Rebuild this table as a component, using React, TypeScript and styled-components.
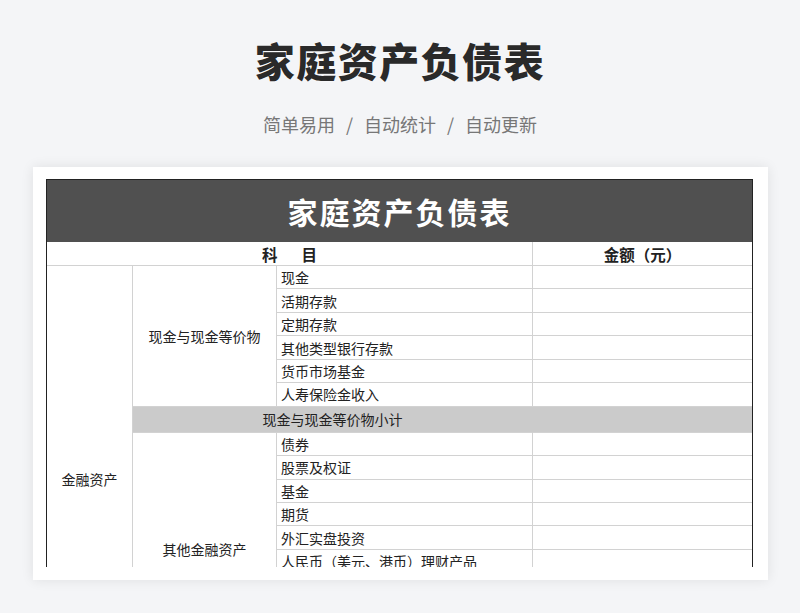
import React from "react";
import styled, { createGlobalStyle } from "styled-components";

const Global = createGlobalStyle`
  html, body {
    margin: 0;
    padding: 0;
    background: #f4f5f7;
  }
  body {
    font-family: "Noto Sans CJK SC", "Noto Sans", "Liberation Sans", sans-serif;
    color: #222;
  }
`;

const Page = styled.div`
  width: 800px;
  height: 613px;
  overflow: hidden;
  display: flex;
  flex-direction: column;
  align-items: center;
  padding-top: 36px;
  box-sizing: border-box;
`;

const Heading = styled.h1`
  margin: 0;
  font-size: 40px;
  line-height: 48px;
  font-weight: 900;
  letter-spacing: 1.5px;
  color: #2a2a2a;
  text-shadow: 0 0 2px #ffffff;
`;

const Tagline = styled.div`
  margin-top: 28px;
  font-size: 18px;
  line-height: 24px;
  color: #777777;
  display: flex;
  align-items: center;
`;

const Slash = styled.span`
  margin: 0 11px;
`;

const Card = styled.div`
  margin-top: 31px;
  margin-left: 1px;
  width: 735px;
  height: 413px;
  box-sizing: border-box;
  background: #ffffff;
  padding: 12px 15px 13px 13px;
  box-shadow: 0 0 12px rgba(0, 0, 0, 0.09);
`;

const Clip = styled.div`
  height: 388px;
  overflow: hidden;
`;

const Sheet = styled.table`
  width: 707px;
  table-layout: fixed;
  border-collapse: separate;
  border-spacing: 0;
  border-top: 1px solid #222;
  border-left: 1px solid #222;
  border-right: 1px solid #222;
  font-size: 14px;
  color: #222;
`;

const TitleCell = styled.td`
  height: 62px;
  background: #505050;
  color: #ffffff;
  font-size: 30px;
  font-weight: 700;
  letter-spacing: 2px;
  text-align: center;
  vertical-align: middle;
  padding: 0;
`;

const HeadCell = styled.td<{ $last?: boolean }>`
  height: 23px;
  padding: 0;
  font-size: 15.5px;
  font-weight: 700;
  text-align: center;
  vertical-align: middle;
  border-bottom: 1px solid #d2d2d2;
  border-right: ${(p) => (p.$last ? "none" : "1px solid #d2d2d2")};
  line-height: 22px;
`;

const HeadSplit = styled.span`
  display: inline-flex;
  gap: 24px;
`;

const Row = styled.tr<{ $h?: number }>`
  height: ${(p) => p.$h ?? 23.45}px;
`;

const GroupCell = styled.td`
  padding: 0 4px;
  text-align: center;
  vertical-align: middle;
  border-right: 1px solid #d2d2d2;
  border-bottom: 1px solid #d2d2d2;
  background: #ffffff;
`;

const ItemCell = styled.td`
  padding: 0 4px;
  text-align: left;
  vertical-align: middle;
  line-height: 20px;
  white-space: nowrap;
  border-right: 1px solid #d2d2d2;
  border-bottom: 1px solid #d2d2d2;
`;

const AmountCell = styled.td<{ $sub?: boolean }>`
  padding: 0;
  border-bottom: 1px solid #d2d2d2;
  background: ${(p) => (p.$sub ? "#cbcbcb" : "#ffffff")};
`;

const SubtotalCell = styled.td`
  padding: 0;
  text-align: center;
  vertical-align: middle;
  background: #cbcbcb;
  border-right: 1px solid #cbcbcb;
  border-bottom: 1px solid #d2d2d2;
`;

type Group = { name: string; items: string[] };

const groups: Group[] = [
  {
    name: "现金与现金等价物",
    items: ["现金", "活期存款", "定期存款", "其他类型银行存款", "货币市场基金", "人寿保险金收入"],
  },
  {
    name: "其他金融资产",
    items: [
      "债券",
      "股票及权证",
      "基金",
      "期货",
      "外汇实盘投资",
      "人民币（美元、港币）理财产品",
      "保险理财产品",
      "证券理财产品",
      "信托理财产品",
      "其他",
    ],
  },
];

const totalRows = groups.reduce((n, g) => n + g.items.length + 1, 0);

export default function App() {
  return (
    <>
      <Global />
      <Page>
        <Heading>家庭资产负债表</Heading>
        <Tagline>
          <span>简单易用</span>
          <Slash>/</Slash>
          <span>自动统计</span>
          <Slash>/</Slash>
          <span>自动更新</span>
        </Tagline>
        <Card>
          <Clip>
            <Sheet>
              <colgroup>
                <col style={{ width: 86 }} />
                <col style={{ width: 144 }} />
                <col style={{ width: 256 }} />
                <col style={{ width: 219 }} />
              </colgroup>
              <tbody>
                <tr>
                  <TitleCell colSpan={4}>家庭资产负债表</TitleCell>
                </tr>
                <tr>
                  <HeadCell colSpan={3}>
                    <HeadSplit>
                      <span>科</span>
                      <span>目</span>
                    </HeadSplit>
                  </HeadCell>
                  <HeadCell $last>金额（元）</HeadCell>
                </tr>
                {groups.map((g, gi) => (
                  <React.Fragment key={g.name}>
                    {g.items.map((item, i) => (
                      <Row key={item}>
                        {gi === 0 && i === 0 && (
                          <GroupCell rowSpan={totalRows}>金融资产</GroupCell>
                        )}
                        {i === 0 && <GroupCell rowSpan={g.items.length}>{g.name}</GroupCell>}
                        <ItemCell>{item}</ItemCell>
                        <AmountCell />
                      </Row>
                    ))}
                    <Row $h={26}>
                      <SubtotalCell colSpan={2}>{g.name}小计</SubtotalCell>
                      <AmountCell $sub />
                    </Row>
                  </React.Fragment>
                ))}
              </tbody>
            </Sheet>
          </Clip>
        </Card>
      </Page>
    </>
  );
}
